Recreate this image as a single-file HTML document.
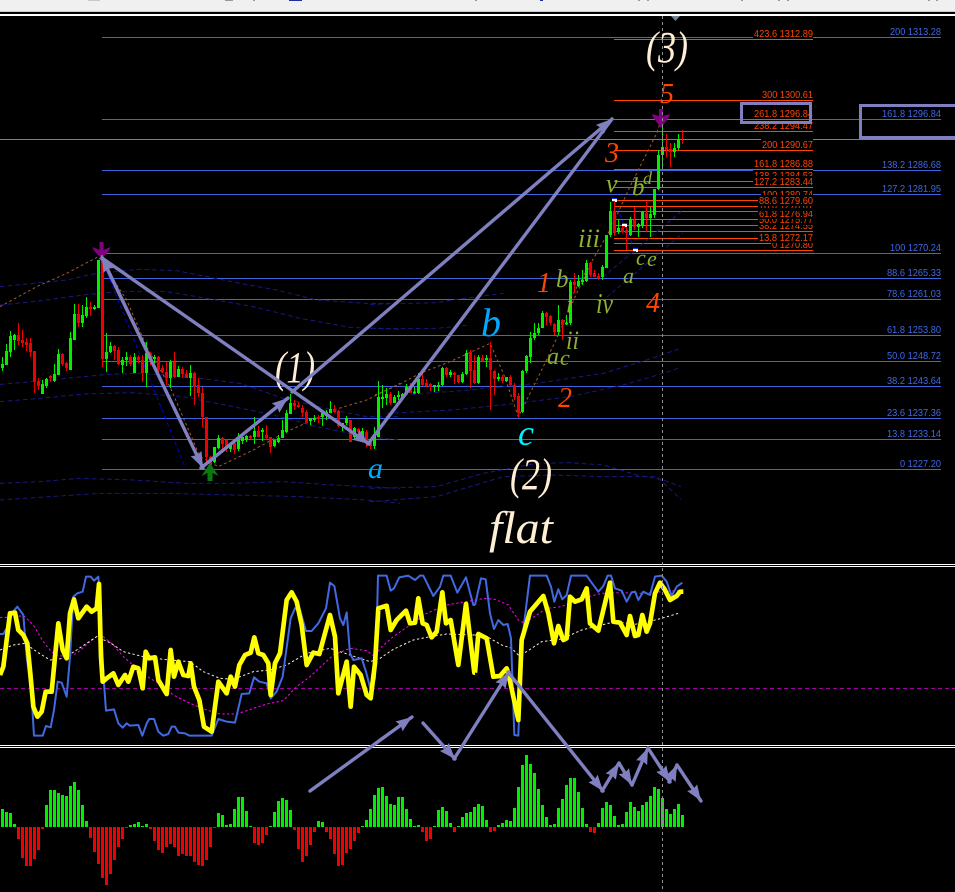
<!DOCTYPE html>
<html>
<head>
<meta charset="utf-8">
<title>Chart</title>
<style>
html,body{margin:0;padding:0;background:#000;width:955px;height:892px;overflow:hidden}
svg{display:block;position:absolute;left:0;top:0}
.lb{font:10.5px "Liberation Sans",sans-serif;fill:#3f68e6}
.lo{font:10.5px "Liberation Sans",sans-serif;fill:#ff4500}
.w{font-family:"Liberation Serif",serif;font-style:italic}
.or{fill:#ff4500;font-size:28px}
.ol{fill:#8fb030}
.cr{fill:#ffefd5}
</style>
</head>
<body>
<svg width="955" height="892" viewBox="0 0 955 892" xmlns="http://www.w3.org/2000/svg">
<defs>
<marker id="h" markerUnits="userSpaceOnUse" markerWidth="18" markerHeight="14" refX="16" refY="7" orient="auto"><path d="M0 1L16 7L0 13L2 7z" fill="#8080c0"/></marker>
</defs>
<rect width="955" height="892" fill="#000"/>
<!-- top bar -->
<rect width="955" height="11" fill="#f0f0f0"/>
<rect y="11" width="955" height="1" fill="#c8c8c8"/>
<rect y="14" width="955" height="2" fill="#fff"/>
<path d="M88 .5H100" stroke="#c8c8c8" fill="none"/>
<path d="M225 .5H233M253 .5H255M475 .5H477M638 .5H640M647 .5H649M741 .5H743M778 .5H780M787 .5H789M928 .5H930M936 .5H938" stroke="#999" fill="none"/>
<path d="M289 .5H302M540 .5H543" stroke="#2030a0" fill="none"/>
<path d="M671 16H680L675.500 21z" fill="#74818f"/>

<!-- horizontal lines -->
<path d="M0 139.500H955" stroke="#808080"/>
<path d="M102 37.500H941M102 119.500H941M102 170.500H941M102 194.500H941M102 253.500H941M102 278.500H941M102 299.500H941M102 335.500H941M102 361.500H941M102 386.500H941M102 418.500H941M102 439.500H941M102 469.500H941" stroke="#3f64dc"/>
<path d="M614 39.500H813M614 100.500H813M614 119.500H813M614 131.500H813M614 150.500H813M614 169.500H813M614 181.500H813M614 187.500H813M614 200.500H813M614 206.500H813M614 211.500H813M614 219.500H813M614 225.500H813M614 231.500H813M614 238.500H813M614 243.500H813M614 250.500H813" stroke="#ff4500"/>

<!-- blue labels -->
<text class="lb" x="890" y="35" textLength="51" lengthAdjust="spacingAndGlyphs">200 1313.28</text>
<text class="lb" x="882" y="117" textLength="59" lengthAdjust="spacingAndGlyphs">161.8 1296.84</text>
<text class="lb" x="882" y="168" textLength="59" lengthAdjust="spacingAndGlyphs">138.2 1286.68</text>
<text class="lb" x="882" y="192" textLength="59" lengthAdjust="spacingAndGlyphs">127.2 1281.95</text>
<text class="lb" x="890" y="251" textLength="51" lengthAdjust="spacingAndGlyphs">100 1270.24</text>
<text class="lb" x="887" y="276" textLength="54" lengthAdjust="spacingAndGlyphs">88.6 1265.33</text>
<text class="lb" x="887" y="297" textLength="54" lengthAdjust="spacingAndGlyphs">78.6 1261.03</text>
<text class="lb" x="887" y="333" textLength="54" lengthAdjust="spacingAndGlyphs">61.8 1253.80</text>
<text class="lb" x="887" y="359" textLength="54" lengthAdjust="spacingAndGlyphs">50.0 1248.72</text>
<text class="lb" x="887" y="384" textLength="54" lengthAdjust="spacingAndGlyphs">38.2 1243.64</text>
<text class="lb" x="887" y="416" textLength="54" lengthAdjust="spacingAndGlyphs">23.6 1237.36</text>
<text class="lb" x="887" y="437" textLength="54" lengthAdjust="spacingAndGlyphs">13.8 1233.14</text>
<text class="lb" x="900" y="467" textLength="41" lengthAdjust="spacingAndGlyphs">0 1227.20</text>

<!-- orange labels -->
<rect x="771" y="239" width="42" height="11"/><text class="lo" x="772" y="248" textLength="41" lengthAdjust="spacingAndGlyphs">0 1270.80</text>
<rect x="758" y="232" width="55" height="11"/><text class="lo" x="759" y="241" textLength="54" lengthAdjust="spacingAndGlyphs">13.8 1272.17</text>
<rect x="758" y="220" width="55" height="11"/><text class="lo" x="759" y="229" textLength="54" lengthAdjust="spacingAndGlyphs">38.2 1274.55</text>
<rect x="758" y="214" width="55" height="11"/><text class="lo" x="759" y="223" textLength="54" lengthAdjust="spacingAndGlyphs">50.0 1275.77</text>
<rect x="758" y="208" width="55" height="11"/><text class="lo" x="759" y="217" textLength="54" lengthAdjust="spacingAndGlyphs">61.8 1276.94</text>
<rect x="758" y="200" width="55" height="8"/><text class="lo" x="759" y="209" textLength="54" lengthAdjust="spacingAndGlyphs">78.6 1278.61</text>
<rect x="758" y="208" width="55" height="3"/>
<rect x="761" y="189" width="52" height="6"/><text class="lo" x="762" y="198" textLength="51" lengthAdjust="spacingAndGlyphs">100 1280.74</text>
<rect x="758" y="195" width="55" height="11"/><text class="lo" x="759" y="204" textLength="54" lengthAdjust="spacingAndGlyphs">88.6 1279.60</text>
<rect x="753" y="170" width="60" height="6"/><text class="lo" x="754" y="179" textLength="59" lengthAdjust="spacingAndGlyphs">138.2 1284.53</text>
<rect x="753" y="176" width="60" height="11"/><text class="lo" x="754" y="185" textLength="59" lengthAdjust="spacingAndGlyphs">127.2 1283.44</text>
<rect x="753" y="158" width="60" height="11"/><text class="lo" x="754" y="167" textLength="59" lengthAdjust="spacingAndGlyphs">161.8 1286.88</text>
<rect x="761" y="139" width="52" height="11"/><text class="lo" x="762" y="148" textLength="51" lengthAdjust="spacingAndGlyphs">200 1290.67</text>
<rect x="753" y="120" width="60" height="11"/><text class="lo" x="754" y="129" textLength="59" lengthAdjust="spacingAndGlyphs">238.2 1294.47</text>
<rect x="753" y="108" width="60" height="11"/><text class="lo" x="754" y="117" textLength="59" lengthAdjust="spacingAndGlyphs">261.8 1296.84</text>
<rect x="761" y="89" width="52" height="11"/><text class="lo" x="762" y="98" textLength="51" lengthAdjust="spacingAndGlyphs">300 1300.61</text>
<rect x="753" y="28" width="60" height="11"/><text class="lo" x="754" y="37" textLength="59" lengthAdjust="spacingAndGlyphs">423.6 1312.89</text>

<!-- dashed envelope bands -->
<g transform="translate(0 240) scale(.33333)" fill="none" stroke="#181880" stroke-width="3" stroke-dasharray="14 9">
<polyline points="0,140 200,120 300,98 420,88 530,92 620,110 720,130 830,150 950,180 1100,190 1200,190"/>
<polyline points="0,195 100,185 250,165 350,155 500,155 620,175 760,200 900,235 1050,262 1200,268"/>
<polyline points="0,433 100,425 200,415 300,405 400,400 500,405 600,415 720,430 850,475 1000,510 1100,530 1200,530"/>
<polyline points="0,485 120,475 250,462 400,458 550,470 700,500 820,525 950,560 1100,590 1200,600"/>
<polyline points="0,730 120,725 240,715 400,720 560,730 700,730 850,725 1000,735 1200,745"/>
<polyline points="0,780 150,770 300,760 500,760 700,765 900,770 1100,780 1200,790"/>
</g>
<g transform="translate(370 260) scale(.33333)" fill="none" stroke="#181880" stroke-width="3" stroke-dasharray="14 9">
<polyline points="0,133 200,128 260,118 400,100"/>
<polyline points="0,205 200,205 300,195"/>
<polyline points="50,460 250,450 440,430 600,410 760,375 880,340 933,322"/>
<polyline points="100,405 300,390 500,370 700,340 830,300 933,265"/>
<polyline points="0,685 200,680 340,640 500,610 600,608 700,615 800,645 880,660 933,680"/>
<polyline points="0,725 200,710 300,680 400,650 550,645 700,650 860,650 933,718"/>
</g>
<path d="M603 277L683 210M607 297L683 233" fill="none" stroke="#181880" stroke-dasharray="4 3"/>
<path d="M102 260L185 467M614 201L635 250" fill="none" stroke="#0000e0" stroke-dasharray="4 3"/>
<!-- brown zigzag -->
<g transform="translate(0 240) scale(.33333)" fill="none" stroke="#a05a2c" stroke-width="3" stroke-dasharray="8 8">
<polyline points="0,200 110,140 200,100 295,50 380,180 440,320 510,440 600,650 655,680 760,630 860,575 960,530 1000,510 1100,480 1200,430"/>
</g>
<g transform="translate(370 260) scale(.33333)" fill="none" stroke="#a05a2c" stroke-width="3" stroke-dasharray="8 8">
<polyline points="15,405 85,375 150,340 240,305 360,250 400,340 445,470 520,320 560,235 620,100 670,0"/>
</g>
<g transform="translate(560 0) scale(.33333)" fill="none" stroke="#a05a2c" stroke-width="3" stroke-dasharray="8 8">
<polyline points="40,880 150,690 210,560 290,400 310,340"/>
</g>

<!-- green candles -->
<path fill="#14e014" stroke="#00f000" d="M2.500 357V371M1.500 364.500h2V367.500h-2zM6.500 344V365M5.500 351.500h2V364.500h-2zM10.500 331V357M9.500 336.500h2V351.500h-2zM14.500 334V350M13.500 335.500h2V339.500h-2zM42.500 380V394M41.500 384.500h2V393.500h-2zM46.500 378V388M45.500 379.500h2V385.500h-2zM54.500 364V382M53.500 374.500h2V380.500h-2zM58.500 349V375M57.500 354.500h2V374.500h-2zM70.500 332V370M69.500 338.500h2V369.500h-2zM74.500 304V340M73.500 314.500h2V339.500h-2zM82.500 305V327M81.500 315.500h2V322.500h-2zM86.500 297V318M85.500 307.500h2V315.500h-2zM94.500 305V310M93.500 307.500h2V308.500h-2zM98.500 260V308M97.500 260.500h2V307.500h-2zM106.500 333V372M105.500 352.500h2V358.500h-2zM110.500 342V353M109.500 346.500h2V351.500h-2zM122.500 357V373M121.500 360.500h2V364.500h-2zM126.500 352V366M125.500 357.500h2V359.500h-2zM134.500 353V373M133.500 357.500h2V372.500h-2zM146.500 342V387M145.500 353.500h2V372.500h-2zM154.500 355V363M153.500 357.500h2V358.500h-2zM170.500 360V388M169.500 362.500h2V377.500h-2zM178.500 366V377M177.500 369.500h2V376.500h-2zM190.500 365V396M189.500 373.500h2V377.500h-2zM214.500 447V463M213.500 447.500h2V461.500h-2zM218.500 435V449M217.500 438.500h2V447.500h-2zM230.500 443V452M229.500 444.500h2V448.500h-2zM238.500 433V451M237.500 439.500h2V448.500h-2zM242.500 437V444M241.500 437.500h2V440.500h-2zM246.500 435V442M245.500 436.500h2V439.500h-2zM254.500 417V444M253.500 431.500h2V436.500h-2zM262.500 428V441M261.500 430.500h2V431.500h-2zM274.500 440V447M273.500 440.500h2V445.500h-2zM278.500 435V443M277.500 438.500h2V441.500h-2zM282.500 420V438M281.500 430.500h2V437.500h-2zM286.500 410V433M285.500 413.500h2V431.500h-2zM290.500 394V414M289.500 403.500h2V413.500h-2zM310.500 418V425M309.500 418.500h2V420.500h-2zM314.500 415V422M313.500 418.500h2V419.500h-2zM322.500 412V426M321.500 413.500h2V416.500h-2zM326.500 410V420M325.500 412.500h2V415.500h-2zM330.500 401V413M329.500 409.500h2V412.500h-2zM342.500 423V431M341.500 423.500h2V426.500h-2zM346.500 416V425M345.500 418.500h2V422.500h-2zM354.500 427V440M353.500 428.500h2V436.500h-2zM362.500 428V437M361.500 431.500h2V436.500h-2zM374.500 427V449M373.500 436.500h2V445.500h-2zM378.500 381V437M377.500 397.500h2V436.500h-2zM382.500 385V408M381.500 397.500h2V398.500h-2zM386.500 388V405M385.500 394.500h2V397.500h-2zM394.500 395V403M393.500 397.500h2V402.500h-2zM398.500 391V400M397.500 395.500h2V396.500h-2zM402.500 393V398M401.500 394.500h2V396.500h-2zM406.500 384V395M405.500 387.500h2V392.500h-2zM414.500 387V394M413.500 392h2V393h-2zM418.500 373V394M417.500 379.500h2V392.500h-2zM434.500 385V392M433.500 385.500h2V386.500h-2zM438.500 382V391M437.500 385.500h2V386.500h-2zM442.500 367V386M441.500 368.500h2V384.500h-2zM450.500 370V377M449.500 372.500h2V374.500h-2zM462.500 372V383M461.500 374.500h2V381.500h-2zM466.500 350V375M465.500 353.500h2V373.500h-2zM478.500 355V384M477.500 357.500h2V382.500h-2zM486.500 355V367M485.500 358.500h2V359.500h-2zM498.500 373V381M497.500 377.500h2V378.500h-2zM506.500 377V382M505.500 377.500h2V380.500h-2zM522.500 370V413M521.500 371.500h2V411.500h-2zM526.500 355V373M525.500 356.500h2V370.500h-2zM530.500 332V363M529.500 338.500h2V356.500h-2zM534.500 323V340M533.500 333.500h2V337.500h-2zM538.500 323V335M537.500 328.500h2V332.500h-2zM542.500 311V328M541.500 313.500h2V327.500h-2zM558.500 305V335M557.500 320.500h2V331.500h-2zM566.500 315V325M565.500 323h2V324h-2zM570.500 280V325M569.500 282.500h2V322.500h-2zM578.500 275V287M577.500 281.500h2V285.500h-2zM582.500 270V285M581.500 280.500h2V281.500h-2zM586.500 260V282M585.500 263.500h2V280.500h-2zM602.500 265V280M601.500 267.500h2V276.500h-2zM606.500 235V268M605.500 235.500h2V267.500h-2zM610.500 202V237M609.500 211.500h2V234.500h-2zM618.500 220V234M617.500 228.500h2V231.500h-2zM630.500 217V236M629.500 219.500h2V234.500h-2zM638.500 223V237M637.500 224.500h2V226.500h-2zM642.500 211V228M641.500 212.500h2V225.500h-2zM650.500 207V237M649.500 214.500h2V217.500h-2zM654.500 189V218M653.500 189.500h2V214.500h-2zM658.500 150V190M657.500 155.500h2V188.500h-2zM662.500 120V167M661.500 147.500h2V154.500h-2zM674.500 143V157M673.500 148.500h2V151.500h-2zM678.500 134V150M677.500 139.500h2V147.500h-2z"/>
<!-- red candles -->
<path fill="#e04860" stroke="#f00000" d="M18.500 323V345M17.500 335.500h2V340.500h-2zM22.500 330V347M21.500 340.500h2V342.500h-2zM26.500 338V351M25.500 342.500h2V344.500h-2zM30.500 338V357M29.500 343.500h2V351.500h-2zM34.500 351V393M33.500 351.500h2V381.500h-2zM38.500 378V390M37.500 381.500h2V385.500h-2zM50.500 375V382M49.500 376.500h2V377.500h-2zM62.500 353V366M61.500 354.500h2V363.500h-2zM66.500 362V371M65.500 363.500h2V367.500h-2zM78.500 304V327M77.500 314.500h2V322.500h-2zM90.500 302V316M89.500 307.500h2V308.500h-2zM102.500 260V367M101.500 260.500h2V358.500h-2zM114.500 345V360M113.500 346.500h2V350.500h-2zM118.500 347V365M117.500 350.500h2V363.500h-2zM130.500 355V366M129.500 357.500h2V363.500h-2zM138.500 355V363M137.500 357.500h2V359.500h-2zM142.500 355V382M141.500 360.500h2V372.500h-2zM150.500 352V365M149.500 353.500h2V359.500h-2zM158.500 356V372M157.500 357.500h2V369.500h-2zM162.500 365V373M161.500 368.500h2V371.500h-2zM166.500 362V385M165.500 372.500h2V377.500h-2zM174.500 352V378M173.500 362.500h2V376.500h-2zM182.500 367V378M181.500 369.500h2V373.500h-2zM186.500 370V378M185.500 374.500h2V377.500h-2zM194.500 372V405M193.500 373.500h2V386.500h-2zM198.500 378V397M197.500 385.500h2V392.500h-2zM202.500 387V427M201.500 393.500h2V416.500h-2zM206.500 417V462M205.500 417.500h2V456.500h-2zM210.500 456V469M209.500 457.500h2V464.500h-2zM222.500 437V453M221.500 438.500h2V443.500h-2zM226.500 439V452M225.500 440.500h2V447.500h-2zM234.500 442V454M233.500 443.500h2V449.500h-2zM250.500 435V439M249.500 436.500h2V437.500h-2zM258.500 426V437M257.500 431.500h2V436.500h-2zM266.500 425V440M265.500 435.500h2V437.500h-2zM270.500 437V453M269.500 437.500h2V446.500h-2zM294.500 400V410M293.500 403.500h2V405.500h-2zM298.500 402V408M297.500 405.500h2V406.500h-2zM302.500 405V417M301.500 408.500h2V412.500h-2zM306.500 410V423M305.500 412.500h2V421.500h-2zM318.500 415V423M317.500 417.500h2V418.500h-2zM334.500 405V413M333.500 409.500h2V411.500h-2zM338.500 410V427M337.500 411.500h2V425.500h-2zM350.500 420V442M349.500 420.500h2V441.500h-2zM358.500 428V440M357.500 429.500h2V431.500h-2zM366.500 430V447M365.500 432.500h2V441.500h-2zM370.500 442V449M369.500 442.500h2V445.500h-2zM390.500 392V405M389.500 394.500h2V402.500h-2zM410.500 383V393M409.500 387.500h2V392.500h-2zM422.500 373V386M421.500 379.500h2V384.500h-2zM426.500 379V387M425.500 383.500h2V385.500h-2zM430.500 383V391M429.500 384.500h2V386.500h-2zM446.500 367V377M445.500 368.500h2V374.500h-2zM454.500 372V384M453.500 373.500h2V374.500h-2zM458.500 375V383M457.500 375.500h2V381.500h-2zM470.500 350V388M469.500 352.500h2V370.500h-2zM474.500 355V384M473.500 370.500h2V382.500h-2zM482.500 355V362M481.500 358.500h2V360.500h-2zM490.500 342V410M489.500 358.500h2V369.500h-2zM494.500 370V395M493.500 371.500h2V378.500h-2zM502.500 375V383M501.500 377.500h2V380.500h-2zM510.500 375V386M509.500 377.500h2V384.500h-2zM514.500 383V400M513.500 385.500h2V396.500h-2zM518.500 393V417M517.500 396.500h2V412.500h-2zM546.500 312V325M545.500 313.500h2V316.500h-2zM550.500 315V325M549.500 316.500h2V322.500h-2zM554.500 323V335M553.500 324.500h2V331.500h-2zM562.500 319V340M561.500 320.500h2V324.500h-2zM574.500 273V293M573.500 282.500h2V284.500h-2zM590.500 262V277M589.500 263.500h2V274.500h-2zM594.500 270V277M593.500 273.500h2V276.500h-2zM598.500 273V280M597.500 276.500h2V277.500h-2zM614.500 200V236M613.500 211.500h2V232.500h-2zM622.500 224V233M621.500 228.500h2V231.500h-2zM626.500 227V250M625.500 230.500h2V232.500h-2zM634.500 207V230M633.500 220.500h2V226.500h-2zM646.500 202V232M645.500 213.500h2V217.500h-2zM666.500 134V157M665.500 147.500h2V149.500h-2zM670.500 143V167M669.500 149.500h2V151.500h-2zM682.500 130V144"/>

<!-- small markers -->
<g>
<rect x="612" y="198" width="5" height="4" fill="#fff"/><path d="M612 198.500h5M612 201.500h3" stroke="#1030ff"/>
<rect x="622" y="223" width="5" height="4" fill="#fff"/><path d="M622 223.500h5M622 226.500h3" stroke="#f00000"/>
<rect x="633" y="248" width="5" height="4" fill="#fff"/><path d="M633 248.500h5M633 251.500h3" stroke="#1030ff"/>
</g>

<!-- purple / green arrows -->
<path d="M99.500 242h4v8l7-3-1 3-8 9-8-9-1-3 7 3z" fill="#800080"/>
<path d="M659 109h4v7l7-2-1 3-8 11-8-11-1-3 7 2z" fill="#800080"/>
<path d="M207.500 481v-8l-6 3 8.500-13 8.500 13-6-3v8z" fill="#0a7a10"/>

<!-- separators -->
<rect y="564" width="955" height="1" fill="#fff"/><rect y="566" width="955" height="1" fill="#fff"/>
<rect y="745" width="955" height="1" fill="#fff"/><rect y="747" width="955" height="1" fill="#fff"/>

<!-- indicator panel -->
<path d="M0 688.500H955" stroke="#a000a0" stroke-dasharray="4 3"/>
<g transform="translate(0 560) scale(.33333)" fill="none" stroke-linejoin="round">
<polyline stroke="#ff00ff" stroke-width="3" stroke-dasharray="7 7" points="0,172 20,172 60,168 75,170 100,195 130,245 150,270 165,285 200,290 230,280 270,245 300,222 340,255 370,290 410,325 450,355 480,372 520,405 570,430 620,450 660,462 710,462 760,445 800,432 850,422 890,380 930,350 1000,285 1050,265 1100,272 1125,290 1140,265 1180,230 1230,195 1280,160 1340,135 1425,120"/>
<polyline stroke="#ffeede" stroke-width="3" stroke-dasharray="7 7" points="0,270 40,255 75,250 110,275 150,300 190,295 230,270 290,230 330,248 370,275 430,290 490,298 570,305 610,335 660,355 700,358 760,335 810,330 860,315 920,280 990,265 1050,285 1110,305 1140,295 1180,268 1240,240 1280,232 1340,222 1425,225"/>
<polyline stroke="#4169e1" stroke-width="6" points="0,222 10,222 20,205 35,160 52,140 70,165 80,290 95,410 102,527 128,527 138,498 152,502 162,450 173,365 185,368 200,410 210,290 220,110 232,100 248,95 258,50 272,50 282,62 295,50 300,140 312,370 318,452 342,448 355,490 368,503 380,490 390,497 415,495 427,527 440,490 448,477 462,477 475,515 490,527 505,522 515,500 525,500 535,518 555,520 568,527 635,527 655,477 680,485 705,488 725,402 748,400 762,352 778,365 800,370 812,415 830,395 848,350 872,175 885,145 900,150 918,213 935,213 955,190 978,145 990,68 1003,78 1020,175 1030,195 1040,157 1050,280 1060,300 1085,295 1098,335 1112,390 1125,355 1132,130 1134,47 1160,47 1172,92 1182,85 1198,52 1225,47 1245,60 1260,47 1270,47 1300,108 1320,80 1330,47 1352,47 1372,98 1398,52 1420,135 1425,135"/>
<polyline stroke="#ffff00" stroke-width="14" points="0,345 10,320 20,240 30,160 45,158 55,210 70,225 82,250 90,330 100,440 112,470 125,455 137,395 155,395 165,290 175,190 188,270 200,295 210,160 222,118 235,175 260,140 275,155 290,145 297,72 303,290 308,365 320,355 340,340 355,375 375,345 385,365 400,320 415,325 428,385 437,275 447,295 465,292 475,360 500,402 512,270 522,350 535,305 550,345 565,348 572,310 582,380 598,420 612,500 635,515 655,365 680,400 692,350 705,380 718,315 735,285 752,278 763,232 775,280 790,285 805,310 812,405 825,310 840,280 860,120 875,97 890,125 905,195 920,315 940,278 958,282 990,165 1005,230 1015,400 1040,305 1052,440 1062,320 1082,345 1100,405 1112,415 1125,310 1135,145 1160,137 1172,210 1190,180 1218,152 1230,190 1245,188 1255,115 1268,190 1280,195 1295,232 1310,215 1327,97 1338,190 1352,180 1375,315 1398,132 1423,338 1425,338"/>
</g>
<g transform="translate(475 560) scale(.33333)" fill="none" stroke-linejoin="round">
<polyline stroke="#ff00ff" stroke-width="3" stroke-dasharray="7 7" points="0,120 30,115 60,118 100,135 130,180 150,190 170,175 215,145 260,140 300,120 380,100 440,98 500,100 560,95 610,92"/>
<polyline stroke="#ffeede" stroke-width="3" stroke-dasharray="7 7" points="0,225 40,232 80,255 110,265 130,285 155,275 200,245 260,237 320,210 380,195 420,185 480,193 540,180 570,172 610,160"/>
<polyline stroke="#4169e1" stroke-width="6" points="0,135 18,55 32,58 45,160 57,207 70,180 85,195 98,192 108,235 118,525 130,527 140,250 165,47 215,47 228,80 238,125 250,88 262,118 275,105 288,47 335,47 350,68 370,95 385,78 398,47 408,47 420,85 440,92 455,125 470,97 480,95 490,120 505,95 525,105 540,50 560,47 575,65 590,108 605,80 622,68"/>
<polyline stroke="#ffff00" stroke-width="14" points="0,338 10,222 35,235 55,350 75,348 95,325 100,340 130,480 140,240 165,155 205,108 220,160 237,250 250,198 265,240 275,235 285,110 300,125 320,118 335,85 345,190 370,212 385,150 405,68 415,185 435,188 455,225 465,168 480,228 490,225 502,165 515,215 525,190 540,100 555,68 570,90 585,120 605,108 615,95 625,95"/>
</g>

<!-- histogram -->
<path fill="none" stroke="#00ee00" stroke-width="3" d="M2.500 827v-18M6.500 827v-15M10.500 827v-14M14.500 827v-3M46.500 827v-22M50.500 827v-37M54.500 827v-37M58.500 827v-34M62.500 827v-32M66.500 827v-31M70.500 827v-41M74.500 827v-45M78.500 827v-37M82.500 827v-22M86.500 827v-6M130.500 827v-2M134.500 827v-3M138.500 827v-5M142.500 827v-1M146.500 827v-3M218.500 827v-14M222.500 827v-12M226.500 827v-2M230.500 827v-3M234.500 827v-18M238.500 827v-30M242.500 827v-30M246.500 827v-16M250.500 827v-1M270.500 827v-1M274.500 827v-15M278.500 827v-26M282.500 827v-29M286.500 827v-27M290.500 827v-17M318.500 827v-6M322.500 827v-5M362.500 827v-1M366.500 827v-7M370.500 827v-18M374.500 827v-32M378.500 827v-39M382.500 827v-40M386.500 827v-31M390.500 827v-23M394.500 827v-22M398.500 827v-30M402.500 827v-30M406.500 827v-18M410.500 827v-8M414.500 827v-1M418.500 827v-2M434.500 827v-1M438.500 827v-17M442.500 827v-20M446.500 827v-16M450.500 827v-4M458.500 827v-1M462.500 827v-10M466.500 827v-14M470.500 827v-15M474.500 827v-20M478.500 827v-23M482.500 827v-21M486.500 827v-7M498.500 827v-2M502.500 827v-4M506.500 827v-7M510.500 827v-6M514.500 827v-19M518.500 827v-40M522.500 827v-62M526.500 827v-72M530.500 827v-63M534.500 827v-54M538.500 827v-38M542.500 827v-22M546.500 827v-10M550.500 827v-2M554.500 827v-3M558.500 827v-19M562.500 827v-28M566.500 827v-42M570.500 827v-49M574.500 827v-49M578.500 827v-35M582.500 827v-19M586.500 827v-3M598.500 827v-4M602.500 827v-19M606.500 827v-25M610.500 827v-22M614.500 827v-11M618.500 827v-2M622.500 827v-3M626.500 827v-15M630.500 827v-25M634.500 827v-20M638.500 827v-16M642.500 827v-22M646.500 827v-25M650.500 827v-31M654.500 827v-40M658.500 827v-38M662.500 827v-29M666.500 827v-18M670.500 827v-13M674.500 827v-18M678.500 827v-23M682.500 827v-12"/>
<path fill="none" stroke="#f00000" stroke-width="3" d="M18.500 827v12M22.500 827v31M26.500 827v39M30.500 827v39M34.500 827v32M38.500 827v23M42.500 827v2M90.500 827v11M94.500 827v25M98.500 827v37M102.500 827v51M106.500 827v58M110.500 827v47M114.500 827v33M118.500 827v20M122.500 827v12M126.500 827v1M150.500 827v2M154.500 827v14M158.500 827v23M162.500 827v26M166.500 827v20M170.500 827v17M174.500 827v20M178.500 827v29M182.500 827v27M186.500 827v29M190.500 827v29M194.500 827v35M198.500 827v38M202.500 827v39M206.500 827v33M210.500 827v20M214.500 827v1M254.500 827v16M258.500 827v18M262.500 827v16M266.500 827v8M294.500 827v3M298.500 827v22M302.500 827v35M306.500 827v29M310.500 827v18M314.500 827v5M326.500 827v5M330.500 827v12M334.500 827v27M338.500 827v39M342.500 827v38M346.500 827v26M350.500 827v22M354.500 827v14M358.500 827v6M422.500 827v5M426.500 827v14M430.500 827v12M454.500 827v5M490.500 827v5M494.500 827v4M590.500 827v5M594.500 827v6"/>

<!-- crosshair -->
<path d="M662.500 16V892" stroke="#909090" stroke-dasharray="3 3"/>

<!-- wave labels -->
<g class="w">
<text class="cr" x="646" y="62" font-size="44" textLength="42" lengthAdjust="spacingAndGlyphs">(3)</text>
<text class="cr" x="275" y="382" font-size="44" textLength="40" lengthAdjust="spacingAndGlyphs">(1)</text>
<text class="cr" x="510" y="489" font-size="44" textLength="42" lengthAdjust="spacingAndGlyphs">(2)</text>
<text class="cr" x="489" y="543" font-size="45" textLength="64" lengthAdjust="spacingAndGlyphs">flat</text>
<text class="or" x="660" y="103" font-size="27">5</text>
<text class="or" x="605" y="162">3</text>
<text class="or" x="537" y="292">1</text>
<text class="or" x="558" y="407">2</text>
<text class="or" x="646" y="312">4</text>
<text fill="#00a8ff" x="481" y="336" font-size="40">b</text>
<text fill="#00a8ff" x="368" y="478" font-size="30">a</text>
<text fill="#00f0ff" x="518" y="445" font-size="36">c</text>
<g class="ol">
<text x="606" y="192" font-size="26">v</text>
<text x="632" y="195" font-size="25">b</text>
<text x="643" y="184" font-size="18">d</text>
<text x="636" y="265" font-size="22">c</text>
<text x="647" y="266" font-size="22">e</text>
<text x="623" y="283" font-size="22">a</text>
<text x="578" y="247" font-size="26" textLength="22" lengthAdjust="spacingAndGlyphs">iii</text>
<text x="556" y="287" font-size="25">b</text>
<text x="566" y="312" font-size="24">i</text>
<text x="596" y="313" font-size="28" textLength="17" lengthAdjust="spacingAndGlyphs">iv</text>
<text x="566" y="349" font-size="26" textLength="13" lengthAdjust="spacingAndGlyphs">ii</text>
<text x="547" y="364" font-size="24">a</text>
<text x="560" y="365" font-size="22">c</text>
</g>
</g>

<!-- thick arrows -->
<g fill="none" stroke="#8080c0" stroke-width="3.400" stroke-linecap="round">
<path d="M102 258L203 468" marker-end="url(#h)"/>
<path d="M203 468L102 256" marker-end="url(#h)" stroke-width="2"/>
<path d="M102 258L369 444" marker-end="url(#h)"/>
<path d="M201 468L288 398" marker-end="url(#h)"/>
<path d="M292 392L612 119" marker-end="url(#h)"/>
<path d="M368 444L612 119"/>
<path d="M310 791L412 717" marker-end="url(#h)"/>
<path d="M423 723L455 759" marker-end="url(#h)"/>
<path d="M454 759L509 672" marker-end="url(#h)"/>
<path d="M508 672L603 791" marker-end="url(#h)"/>
<path d="M602 791L619 763" marker-end="url(#h)"/>
<path d="M619 763L632 785" marker-end="url(#h)"/>
<path d="M632 785L648 748" marker-end="url(#h)"/>
<path d="M648 748L670 782" marker-end="url(#h)"/>
<path d="M669 782L677 765" marker-end="url(#h)"/>
<path d="M677 765L701 801" marker-end="url(#h)"/>
</g>

<!-- boxes -->
<rect x="741.500" y="103.500" width="69" height="19" fill="none" stroke="#8080c0" stroke-width="3"/>
<rect x="860.500" y="105.500" width="100" height="32" fill="none" stroke="#8080c0" stroke-width="3"/>
</svg>
</body>
</html>
